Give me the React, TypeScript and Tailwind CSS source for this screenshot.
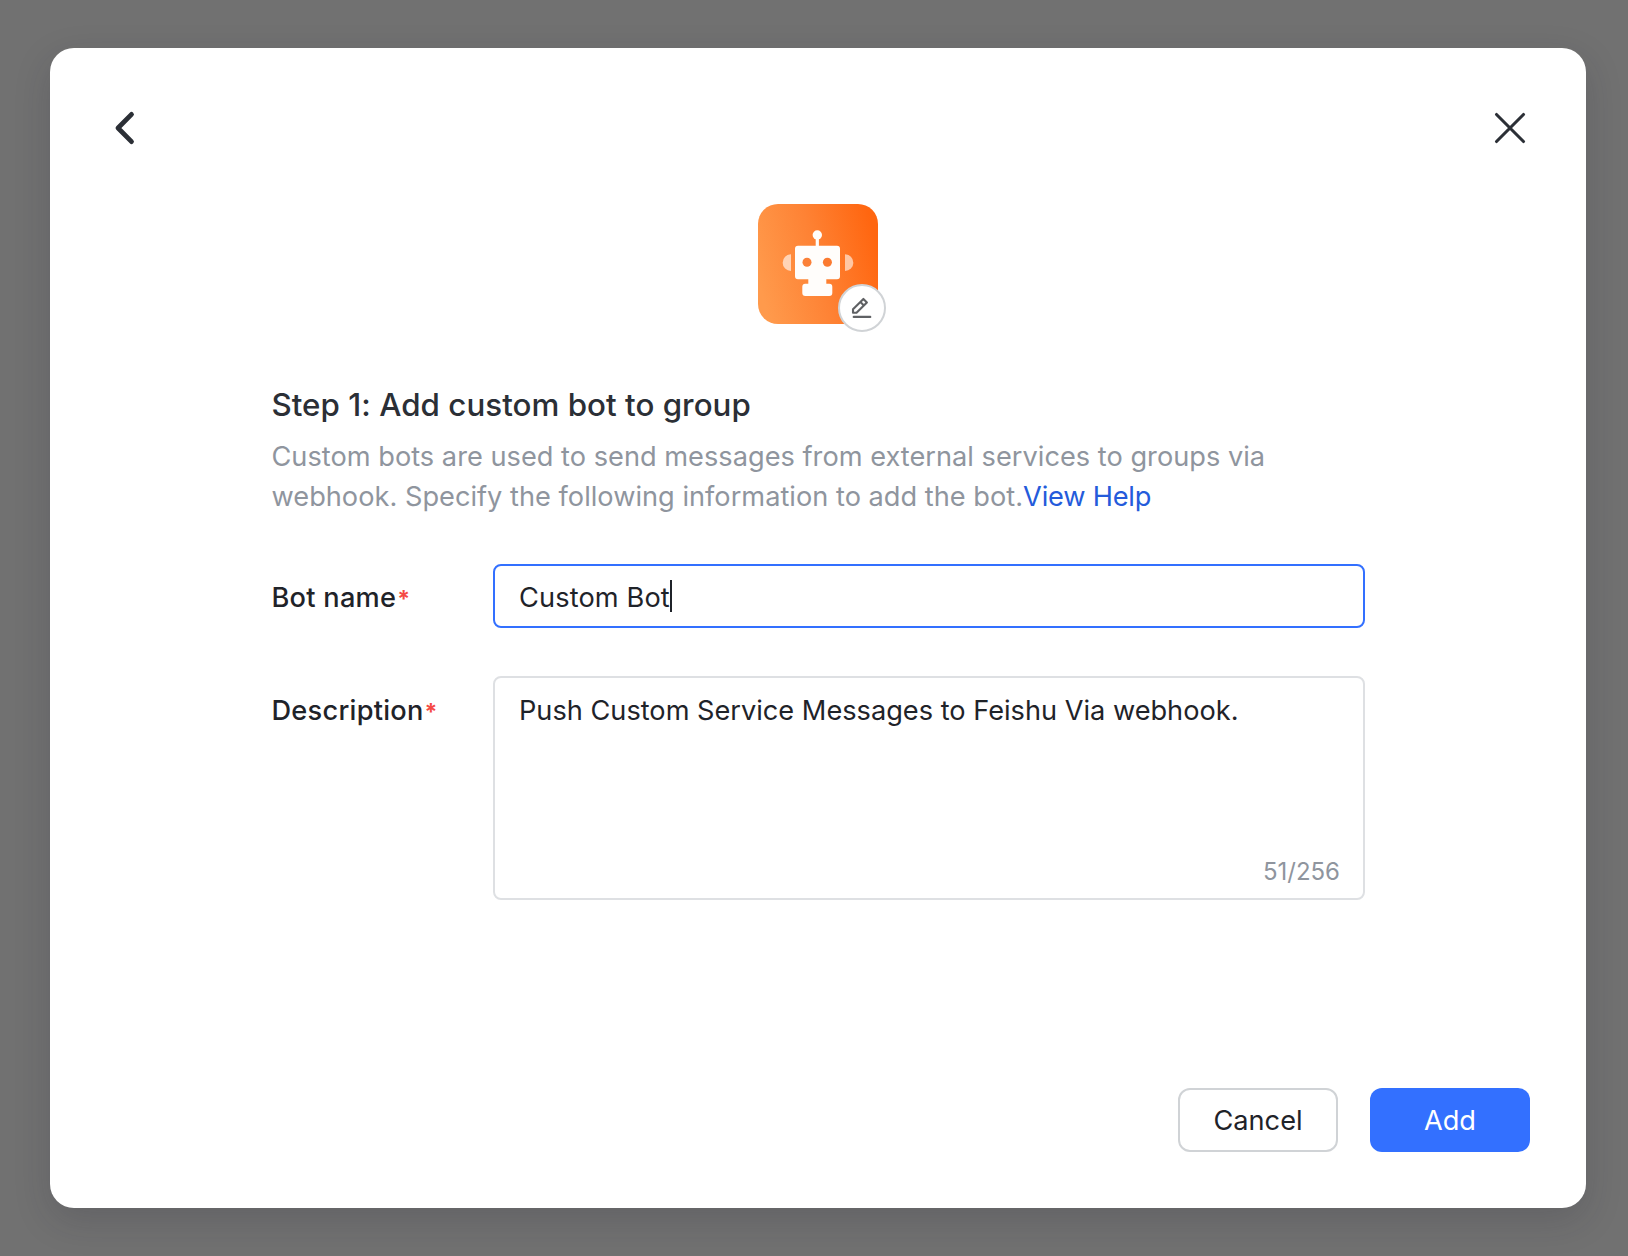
function RobotIcon() {
  return (
    <svg viewBox="0 0 120 120" className="size-[120px]" aria-hidden="true">
      <defs>
        <linearGradient id="bot-bg" x1="0" y1="0.63" x2="1" y2="0.37">
          <stop offset="0" stopColor="#ff9a4c" />
          <stop offset="0.5" stopColor="#fe8234" />
          <stop offset="1" stopColor="#ff6610" />
        </linearGradient>
      </defs>
      <rect width="120" height="120" rx="20" fill="url(#bot-bg)" />
      <path d="M33 50.300v16.700a8.350 8.350 0 0 1 0-16.700Z" fill="#ffd3b5" />
      <path d="M87 50.300v16.700a8.350 8.350 0 0 0 0-16.700Z" fill="#ffc6a3" />
      <circle cx="59.300" cy="31" r="4.700" fill="#fffdfb" />
      <rect x="57.700" y="33" width="3.200" height="11" fill="#fffdfb" />
      <path
        d="M40 41.800h39a3 3 0 0 1 3 3v27.500a3 3 0 0 1-3 3H68.300v4.400H71.300a3 3 0 0 1 3 3v6.300a3 3 0 0 1-3 3H47.300a3 3 0 0 1-3-3v-6.300a3 3 0 0 1 3-3h3v-4.400H40a3 3 0 0 1-3-3V44.800a3 3 0 0 1 3-3Z"
        fill="#fffdfb"
      />
      <circle cx="49" cy="58.300" r="4.500" fill="#fb8038" />
      <circle cx="69.400" cy="58.300" r="4.500" fill="#fb7a30" />
    </svg>
  );
}

function Required() {
  return <span className="ml-px text-[23px] leading-none font-bold text-[#f54a45]">*</span>;
}

export default function App() {
  return (
    <div className="flex h-[1256px] w-[1628px] overflow-hidden bg-[#717171] pt-12 pl-[50px] font-['Inter',sans-serif] text-[#1f2329]">
      <div className="flex h-[1160px] w-[1536px] flex-col rounded-[24px] bg-white shadow-[0_12px_36px_rgba(31,35,51,0.18)]">
        <div className="flex h-[156px] items-start justify-between pt-[60px] pr-[56px] pl-[55px]">
          <button className="size-10" aria-label="Back">
            <svg viewBox="0 0 40 40" className="size-10" fill="none" stroke="#2b2f36" strokeWidth="4.8" strokeLinecap="round" strokeLinejoin="round">
              <path d="M26.500 6.400 13 20l13.500 13.600" />
            </svg>
          </button>
          <button className="size-10" aria-label="Close">
            <svg viewBox="0 0 40 40" className="size-10" fill="none" stroke="#2b2f36" strokeWidth="3.1" strokeLinecap="round">
              <path d="M6.500 6.500l27 27M33.500 6.500l-27 27" />
            </svg>
          </button>
        </div>

        <div className="relative size-[120px] self-center">
          <RobotIcon />
          <button className="absolute -right-2 -bottom-2 flex size-12 items-center justify-center rounded-full border-2 border-[#d0d3d6] bg-white" aria-label="Edit avatar">
            <svg viewBox="0 0 24 24" className="size-6" fill="none" stroke="#5f6164" strokeWidth="2.1" strokeLinecap="round" strokeLinejoin="round">
              <path d="M3 13.300 13.400 2.900l3.500 3.500L6.500 16.800H3Z M10.400 5.900l3.500 3.500" />
              <path d="M3.700 20.900h16.600" />
            </svg>
          </button>
        </div>

        <div className="ml-[221.5px] w-[1093.5px] pt-[59px]">
          <h1 className="text-[31.3px] leading-[44px] font-medium tracking-[0.03px] whitespace-nowrap text-[#2b2f36]">
            Step 1: Add custom bot to group
          </h1>
          <p className="mt-[10px] text-[27.2px] leading-10 tracking-[0.01px] whitespace-nowrap text-[#8f959e]">
            <span className="block">Custom bots are used to send messages from external services to groups via</span>
            <span className="block">
              webhook. Specify the following information to add the bot.
              <a className="tracking-[-0.2px] text-[#245bdb]">View Help</a>
            </span>
          </p>

          <div className="mt-[47px] flex text-[27.2px] leading-[44px]">
            <div className="w-[221.5px] pt-3 font-medium tracking-[0.25px]">
              Bot name<Required />
            </div>
            <div className="flex h-16 w-[872px] items-center rounded-lg border-2 border-[#3370ff] pl-6">
              <span className="pt-[3px] tracking-[0.12px]">Custom Bot</span>
              <span className="h-8 w-0.5 bg-[#1f2329]" />
            </div>
          </div>

          <div className="mt-12 flex text-[27.2px] leading-[44px]">
            <div className="w-[221.5px] pt-[13px] font-medium tracking-[0.25px]">
              Description<Required />
            </div>
            <div className="flex h-56 w-[872px] flex-col justify-between rounded-lg border-2 border-[#dee0e3] pt-[11px] pr-[23px] pb-1.5 pl-6">
              <span className="tracking-[-0.01px] whitespace-nowrap">Push Custom Service Messages to Feishu Via webhook.</span>
              <span className="self-end text-[24px] leading-10 text-[#8f959e]">51/256</span>
            </div>
          </div>
        </div>

        <div className="mt-auto flex justify-end gap-8 pr-14 pb-14 text-[27.2px]">
          <button className="h-16 w-40 rounded-xl border-2 border-[#d0d3d6] pt-0.5">Cancel</button>
          <button className="h-16 w-40 rounded-xl bg-[#3370ff] pt-0.5 text-white">Add</button>
        </div>
      </div>
    </div>
  );
}
